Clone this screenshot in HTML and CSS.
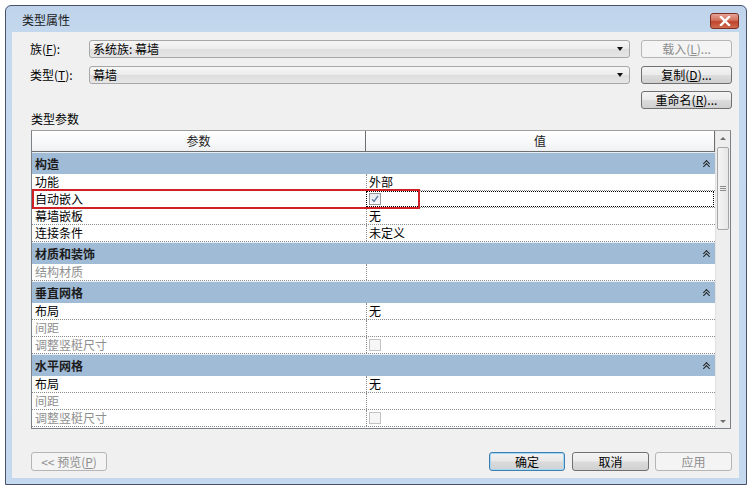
FILE: index.html
```html
<!DOCTYPE html>
<html lang="zh-CN">
<head>
<meta charset="utf-8">
<title>类型属性</title>
<link rel="stylesheet" href="styles.css">
</head>
<body>
<div class="window">
  <div class="titlebar">
    <span class="title">类型属性</span>
    <span class="close"><svg width="12" height="10" viewBox="0 0 12 10"><path d="M2 1 L10 9 M10 1 L2 9" stroke="#fff" stroke-width="2.4" stroke-linecap="square"/></svg></span>
  </div>
  <div class="client">
    <div class="frow">
      <span class="label">族(<u>F</u>):</span>
      <div class="combo"><span>系统族: 幕墙</span><i class="arrow"></i></div>
      <button class="btn disabled">载入(<u>L</u>)...</button>
    </div>
    <div class="frow">
      <span class="label">类型(<u>T</u>):</span>
      <div class="combo"><span>幕墙</span><i class="arrow"></i></div>
      <button class="btn">复制(<u>D</u>)...</button>
    </div>
    <div class="frow end">
      <button class="btn">重命名(<u>R</u>)...</button>
    </div>
    <div class="section">类型参数</div>
    <div class="table">
      <div class="grid">
        <div class="thead"><div class="pc">参数</div><div class="vc">值</div></div>
        <div class="group"><span>构造</span><i class="chev"></i></div>
        <div class="row"><div class="pc">功能</div><div class="vc">外部</div></div>
        <div class="row"><div class="pc">自动嵌入</div><div class="vc focus"><span class="cb checked"><svg width="8" height="8" viewBox="0 0 8 8"><path d="M1 4.2 L3 6.5 L7 1" fill="none" stroke="#5f7fa6" stroke-width="1.4"/></svg></span></div></div>
        <div class="row"><div class="pc">幕墙嵌板</div><div class="vc">无</div></div>
        <div class="row"><div class="pc">连接条件</div><div class="vc">未定义</div></div>
        <div class="group"><span>材质和装饰</span><i class="chev"></i></div>
        <div class="row dim"><div class="pc">结构材质</div><div class="vc"></div></div>
        <div class="group"><span>垂直网格</span><i class="chev"></i></div>
        <div class="row"><div class="pc">布局</div><div class="vc">无</div></div>
        <div class="row dim"><div class="pc">间距</div><div class="vc"></div></div>
        <div class="row dim"><div class="pc">调整竖梃尺寸</div><div class="vc"><span class="cb"></span></div></div>
        <div class="group"><span>水平网格</span><i class="chev"></i></div>
        <div class="row"><div class="pc">布局</div><div class="vc">无</div></div>
        <div class="row dim"><div class="pc">间距</div><div class="vc"></div></div>
        <div class="row dim"><div class="pc">调整竖梃尺寸</div><div class="vc"><span class="cb"></span></div></div>
      </div>
      <div class="scrollbar">
        <i class="up"></i>
        <div class="thumb"><i></i><i></i><i></i></div>
        <i class="down"></i>
      </div>
      <div class="highlight"></div>
    </div>
    <div class="bottom">
      <button class="btn disabled wide">&lt;&lt; 预览(<u>P</u>)</button>
      <span class="spacer"></span>
      <button class="btn default">确定</button>
      <button class="btn">取消</button>
      <button class="btn disabled">应用</button>
    </div>
    <i class="grip"></i>
  </div>
</div>
</body>
</html>
```
FILE: styles.css
```css
* { box-sizing: border-box; }
html, body { margin: 0; padding: 0; background: #fff; }
body {
  font-family: "Noto Sans CJK SC", "Liberation Sans", sans-serif;
  font-size: 12px;
  color: #000;
}
u { text-decoration: underline; }

.window {
  margin: 5px 0 0 5px;
  width: 742px;
  height: 480px;
  border: 1px solid #46536a;
  border-radius: 6px 6px 0 0;
  background: linear-gradient(#bfd3ea, #c5d9ef 40px, #c4d8ee);
  padding: 0 7px 6px 6px;
  display: flex;
  flex-direction: column;
}
.titlebar {
  height: 26px;
  display: flex;
  align-items: center;
  justify-content: space-between;
  padding: 0 0 0 10px;
}
.title { font-size: 12px; line-height: 14px; color: #1a1a1a; margin-top: 2px; }
.close {
  width: 29px;
  height: 16px;
  margin-top: 3px;
  border: 1px solid #7d2f24;
  border-radius: 3px;
  background: linear-gradient(#e7a596, #d2705c 45%, #c0442c 55%, #cf6a4e);
  display: flex;
  align-items: center;
  justify-content: center;
}

.client {
  position: relative;
  flex: 1;
  background: #f0f0f0;
  display: flex;
  flex-direction: column;
  padding: 8px 7px 0 18px;
}
.frow { display: flex; align-items: center; height: 18px; margin-bottom: 8px; }
.frow:nth-child(2) { margin-bottom: 7px; }
.frow.end { justify-content: flex-end; margin-bottom: 4px; }
.label { width: 59px; line-height: 14px; }
.combo {
  width: 541px;
  height: 18px;
  border: 1px solid #a7a7a7;
  border-radius: 3px;
  background: linear-gradient(#f6f6f6, #ececec 50%, #dedede 51%, #e6e6e6);
  display: flex;
  align-items: center;
  justify-content: space-between;
  padding: 0 5px 0 3px;
  line-height: 14px;
}
.arrow {
  width: 0; height: 0;
  border-left: 3.5px solid transparent;
  border-right: 3.5px solid transparent;
  border-top: 4px solid #111;
  margin-right: 1px;
}
.btn {
  font: inherit;
  font-size: 12px;
  line-height: 14px;
  width: 91px;
  height: 18px;
  margin-left: 11px;
  padding: 0;
  color: #000;
  border: 1px solid #707070;
  border-radius: 3px;
  background: linear-gradient(#f4f4f4, #ebebeb 48%, #dcdcdc 52%, #d0d0d0);
}
.btn.disabled {
  color: #8d8d8d;
  border-color: #b5b5b5;
  background: #f4f4f4;
}
.section { height: 12px; line-height: 12px; margin-bottom: 5px; margin-left: 1px; }

.table {
  position: relative;
  width: 700px;
  height: 299px;
  margin-left: 1px;
  border: 1px solid #7c8087;
  border-top-color: #a0a0a0;
  display: flex;
  background: #fff;
}
.grid { width: 683px; display: flex; flex-direction: column; }
.thead {
  height: 21px;
  display: flex;
  background: linear-gradient(#ffffff, #f7f8f9 60%, #eef0f2);
  border-bottom: 1px solid #6f6f6f;
  border-right: 1px solid #6f6f6f;
}
.thead .pc, .thead .vc {
  display: flex; align-items: center; justify-content: center;
  line-height: 14px; color: #222;
}
.thead .pc { width: 334px; border-right: 1px solid #6f6f6f; }
.thead .vc { flex: 1; }
.group {
  height: 22px;
  border-top: 1px solid #e6edf5;
  background: #a0bbd6;
  display: flex;
  align-items: center;
  justify-content: space-between;
  padding: 0 5px 0 3px;
  font-weight: bold;
  color: #1c1c1c;
  line-height: 14px;
}
.chev { width: 7px; height: 8px; position: relative; }
.chev::before, .chev::after {
  content: "";
  position: absolute;
  left: 1px;
  width: 4px; height: 4px;
  border-left: 1.5px solid #222;
  border-top: 1.5px solid #222;
  transform: rotate(45deg);
}
.chev::before { top: 1px; }
.chev::after { top: 4px; }
.row {
  height: 17px;
  display: flex;
  border-bottom: 1px dotted #8c8c8c;
  line-height: 14px;
}
.row .pc { width: 334px; padding-left: 3px; display: flex; align-items: center; }
.row .vc {
  flex: 1;
  border-left: 1px dotted #8c8c8c;
  padding-left: 2px;
  display: flex;
  align-items: center;
}
.row .vc.focus { outline: 1px dotted #000; outline-offset: -1px; margin-right: 1px; }
.row.dim .pc { color: #8f8f8f; }
.cb {
  width: 12px; height: 12px;
  border: 1px solid #c3c3c3;
  background: #f6f6f6;
  display: inline-flex;
  align-items: center;
  justify-content: center;
}
.cb.checked { border-color: #9a9a9a; background: linear-gradient(#e6eaf0, #fbfbfc); }

.scrollbar {
  flex: 1;
  background: #eeeeee;
  border-left: 1px solid #e2e2e2;
  display: flex;
  flex-direction: column;
  align-items: center;
  padding-top: 6px;
}
.up, .down {
  width: 0; height: 0;
  border-left: 3px solid transparent;
  border-right: 3px solid transparent;
}
.up { border-bottom: 3px solid #6e6e6e; }
.down { border-top: 3px solid #6e6e6e; margin-top: auto; margin-bottom: 5px; }
.thumb {
  margin-top: 7px;
  width: 12px;
  height: 83px;
  border: 1px solid #a6a6a6;
  border-radius: 2px;
  background: linear-gradient(90deg, #f4f4f4, #e6e6e6);
  display: flex;
  flex-direction: column;
  justify-content: center;
  align-items: center;
  gap: 1px;
}
.thumb i { width: 6px; height: 1px; background: #8a8a8a; }

.highlight {
  position: absolute;
  left: 0;
  top: 58px;
  width: 388px;
  height: 20px;
  border: 2px solid #cf2126;
}

.bottom {
  margin-top: 23px;
  display: flex;
  height: 19px;
  padding-left: 1px;
}
.bottom .btn { width: 76px; height: 19px; margin-left: 7px; }
.bottom .btn.wide { margin-left: 0; }
.bottom .btn:last-child { width: 77px; margin-left: 6px; }
.bottom .btn:nth-last-child(2) { width: 77px; }
.spacer { flex: 1; }
.btn.default {
  border-color: #3c7fb1;
  box-shadow: inset 0 0 0 1px #a6d7f2;
  background: linear-gradient(#f2f2f2, #e8e8e8 48%, #dadada 52%, #cfd3d6);
}
.grip {
  position: absolute;
  right: 2px;
  bottom: 2px;
  width: 6px; height: 6px;
  background: radial-gradient(circle, #b0b0b0 40%, transparent 45%) 0 0/2px 2px;
  clip-path: polygon(100% 0, 100% 100%, 0 100%);
}
```
